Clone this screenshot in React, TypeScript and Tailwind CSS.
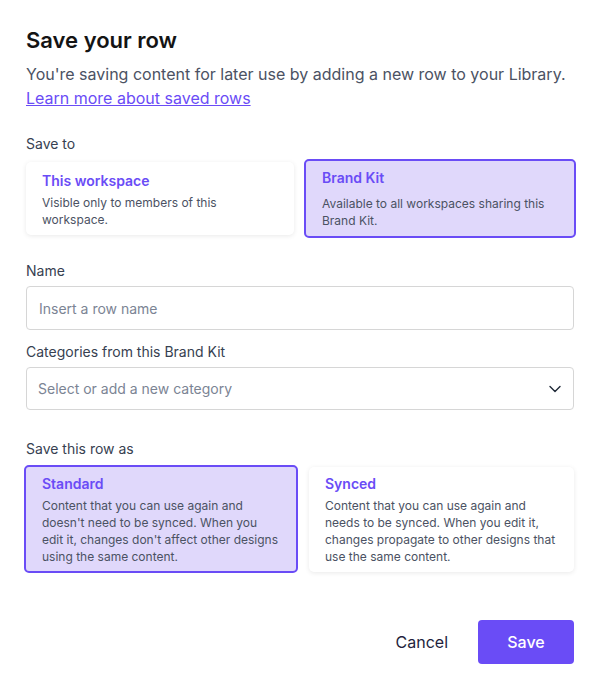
import React, { useState } from "react";

const purple = "text-[#6a4cf6]";

type OptionCardProps = {
  title: string;
  text: string;
  selected: boolean;
  onClick: () => void;
  className?: string;
};

const OptionCard: React.FC<OptionCardProps> = ({ title, text, selected, onClick, className = "" }) => (
  <button
    type="button"
    onClick={onClick}
    className={`text-left rounded-[5px] ${
      selected
        ? "border-2 border-[#6a4cf6] bg-[#e0d8fb]"
        : "bg-white shadow-[0_1px_5px_rgba(0,0,0,0.09)]"
    } ${className}`}
  >
    <div className={`text-[14px] leading-5 font-semibold ${purple}`}>{title}</div>
    <div className="text-[12px] leading-[17px] text-[#4b5263]">{text}</div>
  </button>
);

export default function App() {
  const [target, setTarget] = useState<"workspace" | "brand">("brand");
  const [kind, setKind] = useState<"standard" | "synced">("standard");

  return (
    <div className="w-[601px] h-[691px] bg-white pl-[26px] pr-[27px] pt-[26px] font-['Inter',sans-serif] text-[#111827]">
      <h1 className="text-[22px] leading-7 font-semibold text-[#141414]">Save your row</h1>
      <p className="mt-2 text-[16px] leading-6 text-[#4b5263]">
        You're saving content for later use by adding a new row to your Library.
      </p>
      <a href="#" className={`block text-[16px] leading-6 underline ${purple}`}>
        Learn more about saved rows
      </a>

      <div className="mt-6 text-[14px] leading-5 text-[#374151]">Save to</div>
      <div className="mt-[5px] grid grid-cols-[268px_268px] gap-3 items-center">
        <OptionCard
          title="This workspace"
          text="Visible only to members of this workspace."
          selected={target === "workspace"}
          onClick={() => setTarget("workspace")}
          className={target === "workspace" ? "-mx-[2px] px-4 pt-[7px] pb-[7px]" : "pl-4 pr-3 pt-[9px] pb-[7px] [&>div:last-child]:mt-[3px]"}
        />
        <OptionCard
          title="Brand Kit"
          text="Available to all workspaces sharing this Brand Kit."
          selected={target === "brand"}
          onClick={() => setTarget("brand")}
          className={target === "brand" ? "-mx-[2px] px-4 pt-[7px] pb-[7px] [&>div:last-child]:mt-[7px]" : "pl-4 pr-3 pt-[9px] pb-[7px]"}
        />
      </div>

      <div className="mt-[23px] text-[14px] leading-5 text-[#374151]">Name</div>
      <input
        placeholder="Insert a row name"
        className="mt-[5px] w-full h-[44px] rounded-[4px] border border-[#d6d6d6] px-3 text-[14px] text-[#374151] placeholder:text-[#7b8494] outline-none"
      />

      <div className="mt-3 text-[14px] leading-5 text-[#374151]">Categories from this Brand Kit</div>
      <div className="mt-[5px] flex items-center justify-between w-full h-[43px] rounded-[4px] border border-[#d6d6d6] pl-[11px] pr-[12px]">
        <span className="text-[14px] text-[#7b8494]">Select or add a new category</span>
        <svg width="12" height="8" viewBox="0 0 12 8" fill="none">
          <path d="M1 1.5l5 5 5-5" stroke="#1f2937" strokeWidth="1.4" strokeLinecap="round" strokeLinejoin="round" />
        </svg>
      </div>

      <div className="mt-[29px] text-[14px] leading-5 text-[#374151]">Save this row as</div>
      <div className="mt-[6px] grid grid-cols-[270px_265px] gap-[13px] items-center">
        <OptionCard
          title="Standard"
          text="Content that you can use again and doesn't need to be synced. When you edit it, changes don't affect other designs using the same content."
          selected={kind === "standard"}
          onClick={() => setKind("standard")}
          className="-mx-[2px] pl-4 pr-[18px] pt-[7px] pb-[6px] [&>div:last-child]:mt-[3px]"
        />
        <OptionCard
          title="Synced"
          text="Content that you can use again and needs to be synced. When you edit it, changes propagate to other designs that use the same content."
          selected={kind === "synced"}
          onClick={() => setKind("synced")}
          className="pl-4 pr-3 pt-[7px] pb-[7px] [&>div:last-child]:mt-[3px]"
        />
      </div>

      <div className="mt-[47px] flex justify-end items-center gap-[30px]">
        <button type="button" className="text-[16px] text-[#231f3d]">Cancel</button>
        <button type="button" className="w-[96px] h-[44px] rounded-[4px] bg-[#6a4cf6] text-white text-[16px] font-medium">
          Save
        </button>
      </div>
    </div>
  );
}
